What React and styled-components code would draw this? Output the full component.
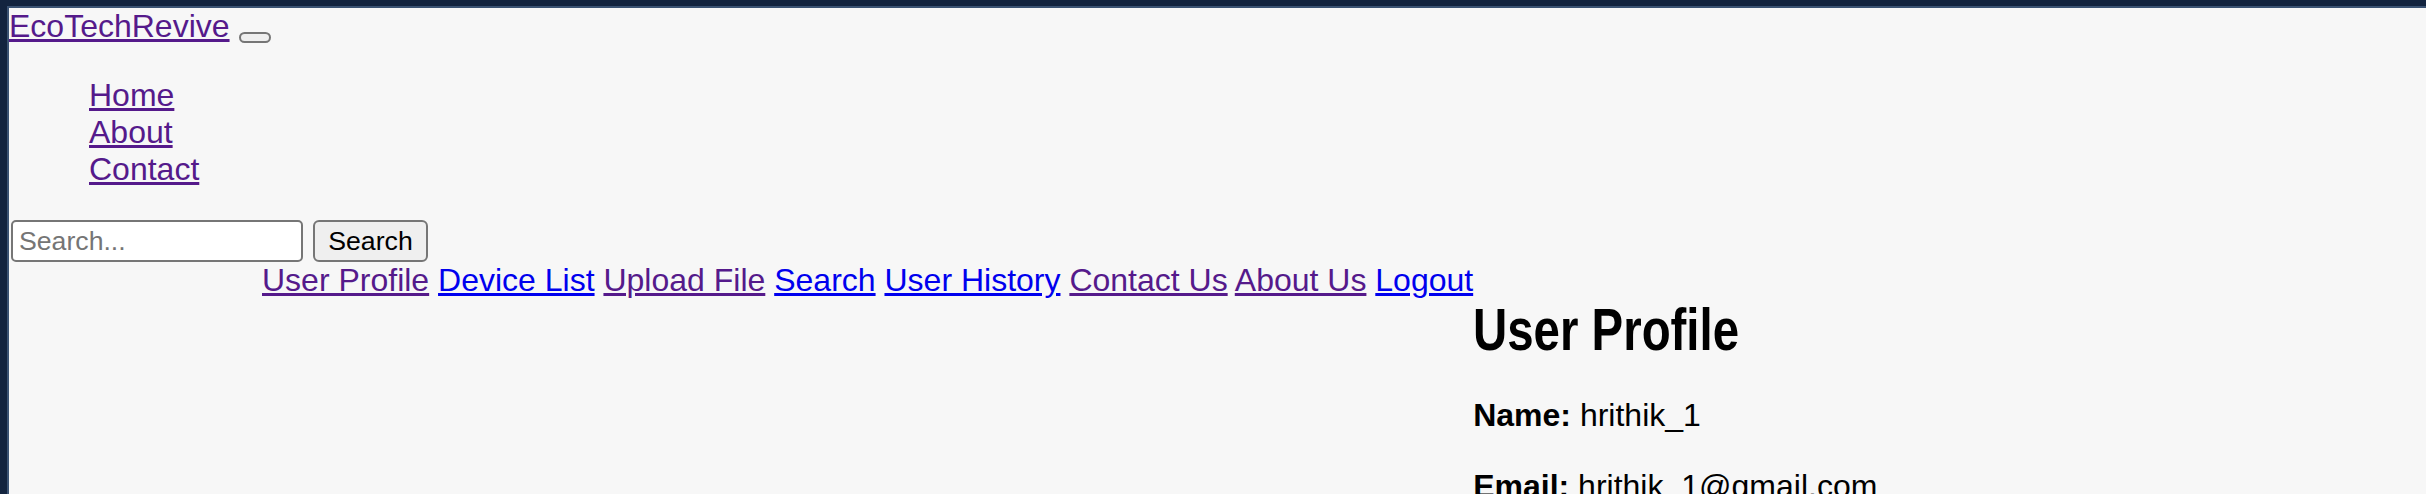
import React from 'react';
import styled, { createGlobalStyle } from 'styled-components';

const menu = ['Home', 'About', 'Contact'];

const links = [
  { label: 'User Profile', visited: true },
  { label: 'Device List', visited: false },
  { label: 'Upload File', visited: true },
  { label: 'Search', visited: false },
  { label: 'User History', visited: false },
  { label: 'Contact Us', visited: true },
  { label: 'About Us', visited: true },
  { label: 'Logout', visited: false },
];

const App = () => {
  return (
    <>
      <GlobalStyle />
      <FRAME>
        <PAGE>
          <HEADER>
            <LINK href="#" $visited>EcoTechRevive</LINK>
            <TOGGLE type="button" />
          </HEADER>
          <MENU>
            {menu.map((m) => (
              <li key={m}>
                <LINK href="#" $visited>{m}</LINK>
              </li>
            ))}
          </MENU>
          <FORM onSubmit={(e) => e.preventDefault()}>
            <INPUT type="text" placeholder="Search..." />
            <BUTTON type="submit">Search</BUTTON>
          </FORM>
          <ROW>
            <NAV>
              {links.map((l, i) => (
                <React.Fragment key={l.label}>
                  <LINK href="#" $visited={l.visited}>{l.label}</LINK>
                  {i < links.length - 1 ? ' ' : null}
                </React.Fragment>
              ))}
            </NAV>
            <PROFILE>
              <TITLE>User Profile</TITLE>
              <FIELD><b>Name:</b> hrithik_1</FIELD>
              <FIELD><b>Email:</b> hrithik_1@gmail.com</FIELD>
            </PROFILE>
          </ROW>
        </PAGE>
      </FRAME>
    </>
  );
};

const GlobalStyle = createGlobalStyle`
  html, body {
    margin: 0;
    background: #13243f;
    overflow: hidden;
  }
  body {
    font-family: 'Liberation Sans', Arial, Helvetica, sans-serif;
    font-size: 32px;
    color: #000;
  }
`;

const FRAME = styled.div`
  padding: 6px 0 0 7px;
  min-height: 100vh;
  box-sizing: border-box;
`;

const PAGE = styled.div`
  background: #f7f7f7;
  border-top: 2px solid #3b5373;
  border-left: 2px solid #3b5373;
  min-height: calc(100vh - 6px);
  box-sizing: border-box;
`;

const LINK = styled.a`
  color: ${(p) => (p.$visited ? '#551a8b' : '#0000ee')};
  text-decoration: underline;
`;

const HEADER = styled.div`
  display: flex;
  align-items: flex-start;
  gap: 9px;
`;

const TOGGLE = styled.button`
  margin-top: 24px;
  width: 32px;
  height: 11px;
  padding: 0;
  border: 2px solid #767676;
  border-radius: 6px;
  background: #efefef;
`;

const MENU = styled.ul`
  list-style: none;
  margin: 32px 0;
  padding-left: 80px;
`;

const FORM = styled.form`
  display: flex;
  gap: 10px;
  margin: 0;
`;

const INPUT = styled.input`
  box-sizing: border-box;
  width: 292px;
  height: 42px;
  margin: 0 0 0 2px;
  padding: 0 6px;
  border: 2px solid #767676;
  border-radius: 5px;
  background: #fff;
  font-family: 'Liberation Sans', Arial, sans-serif;
  font-size: 26.67px;
  color: #000;

  &::placeholder {
    color: #757575;
  }
`;

const BUTTON = styled.button`
  box-sizing: border-box;
  width: 115px;
  height: 42px;
  padding: 0;
  border: 2px solid #767676;
  border-radius: 6px;
  background: #efefef;
  font-family: 'Liberation Sans', Arial, sans-serif;
  font-size: 26.67px;
  color: #000;
`;

const ROW = styled.div`
  display: flex;
  align-items: flex-start;
`;

const NAV = styled.nav`
  padding-left: 253px;
  white-space: nowrap;
`;

const PROFILE = styled.section`
  padding-top: 33px;
`;

const TITLE = styled.h1`
  font-size: 60px;
  font-weight: 700;
  margin: 0 0 33px;
  transform: scaleX(0.79);
  transform-origin: left center;
  white-space: nowrap;
`;

const FIELD = styled.p`
  margin: 0 0 34px;
`;

export default App;
